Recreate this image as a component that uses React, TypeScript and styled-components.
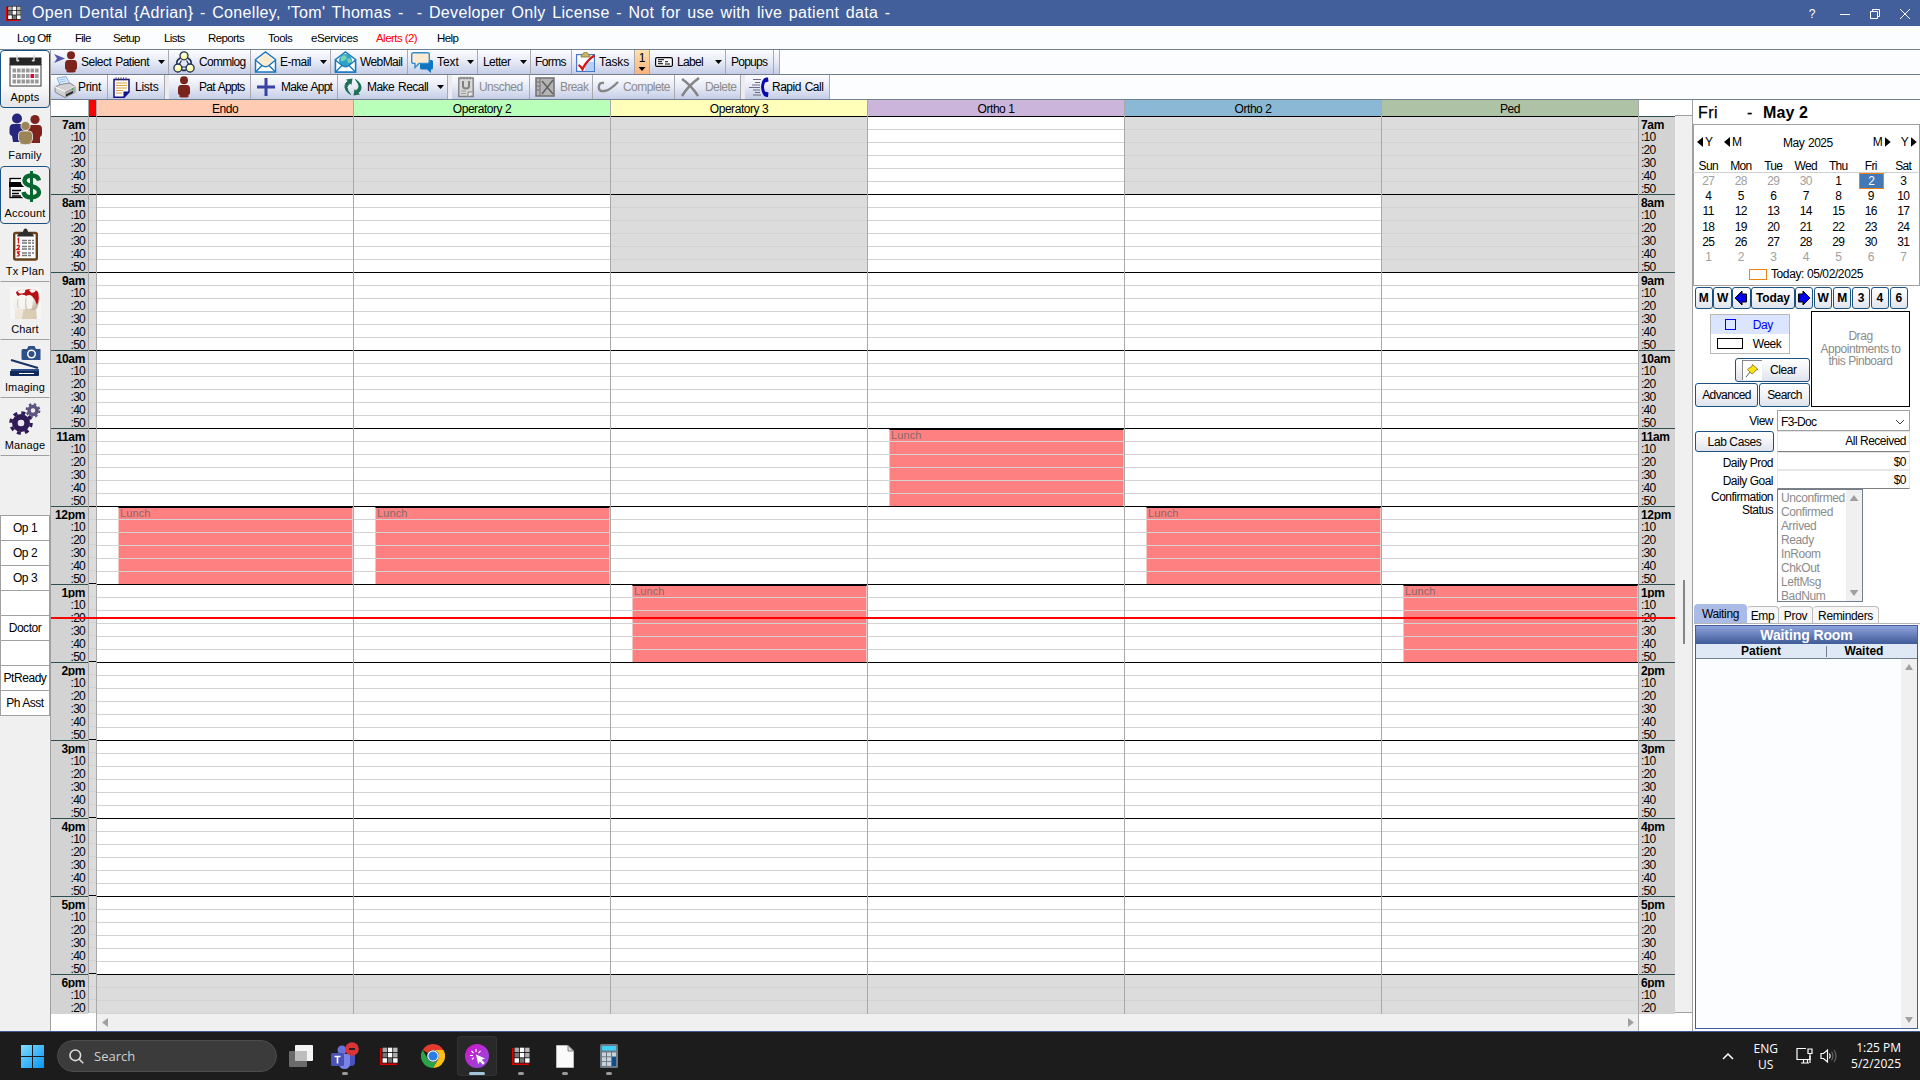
import React from "react";
import styled, { createGlobalStyle, css } from "styled-components";

const GlobalStyle = createGlobalStyle`
  * { box-sizing: border-box; }
  html, body { margin: 0; padding: 0; overflow: hidden; }
  body {
    font-family: "Liberation Sans", Arial, sans-serif;
    font-size: 12px;
    color: #000;
    background: #fff;
  }
  svg { display: block; flex: none; }
`;

const Screen = styled.div`
  width: 1920px;
  height: 1080px;
  display: flex;
  flex-direction: column;
  overflow: hidden;
  background: #fff;
  white-space: pre;
`;

const Txt = styled.span<{ $ls?: number }>`
  letter-spacing: ${(p) => p.$ls ?? -0.5}px;
  word-spacing: 1px;
`;

/* ---------- title bar and menu ---------- */

const TitleBar = styled.header`
  height: 26px;
  flex: none;
  display: flex;
  align-items: center;
  background: #425e9b;
  color: #fff;
  padding-left: 6px;
`;
const TitleText = styled.div`
  margin-left: 11px;
  flex: 1;
  font-size: 16px;
  line-height: 26px;
  letter-spacing: 0.33px;
  word-spacing: 1.8px;
`;
const WindowButtons = styled.div`
  display: flex;
  align-items: center;
  svg { margin-top: 2px; }
`;
const HelpMark = styled.span`
  width: 30px;
  text-align: center;
  font-size: 12px;
  padding-top: 2px;
`;
const MenuBar = styled.nav`
  height: 24px;
  flex: none;
  display: flex;
  align-items: center;
  padding-left: 17px;
  background: #fcfdfe;
  border-bottom: 1px solid #708090;
`;
const MenuItem = styled.div<{ $w: number; $alert?: boolean; $ls: number }>`
  width: ${(p) => p.$w}px;
  font-size: 11.5px;
  letter-spacing: ${(p) => p.$ls}px;
  color: ${(p) => (p.$alert ? "#f00" : "#000")};
`;

const MENU: [string, number, number][] = [
  ["Log Off", 58, -0.55],
  ["File", 38, -0.75],
  ["Setup", 51, -0.65],
  ["Lists", 44, -0.6],
  ["Reports", 60, -0.6],
  ["Tools", 43, -0.5],
  ["eServices", 65, -0.42],
  ["Alerts (2)", 61, -0.55],
  ["Help", 60, -0.6],
];

/* ---------- main frame ---------- */

const Body = styled.div`
  flex: 1;
  min-height: 0;
  display: flex;
`;
const SideBar = styled.aside`
  width: 51px;
  flex: none;
  display: flex;
  flex-direction: column;
  background: #f0f0f0;
  border-right: 1px solid #a0a0a0;
`;
const Module = styled.div<{ $boxed?: boolean; $line?: boolean; $shade?: boolean }>`
  height: 58px;
  flex: none;
  display: flex;
  flex-direction: column;
  align-items: center;
  padding-top: 2px;
  border: 1px solid transparent;
  font-size: 11px;
  letter-spacing: 0.15px;
  ${(p) => p.$line && css`border-bottom-color: #a0a0a0;`}
  ${(p) =>
    p.$boxed &&
    css`
      border-color: #1c5180;
      border-radius: 4px;
    `}
  ${(p) => p.$shade && css`background: linear-gradient(#fff 55%, #e3e3e8);`}
`;
const ModuleIcon = styled.div`
  height: 35px;
  display: flex;
  align-items: center;
`;
const ModuleName = styled.div`
  line-height: 14px;
  margin-top: 2px;
`;
const OpList = styled.div`
  margin-top: 59px;
  border: 1px solid #a0a0a0;
  border-bottom: 0;
  background: #fff;
`;
const OpItem = styled.div`
  height: 25px;
  line-height: 24px;
  text-align: center;
  letter-spacing: -0.45px;
  border-bottom: 1px solid #a0a0a0;
`;
const Main = styled.div`
  flex: 1;
  min-width: 0;
  display: flex;
  flex-direction: column;
`;

/* ---------- tool bars ---------- */

const ToolBar = styled.div`
  height: 25px;
  flex: none;
  display: flex;
  border-bottom: 1px solid #708090;
  background: #fcfdfe;
`;
const ToolButton = styled.div<{ $w: number; $at: number; $off?: boolean }>`
  width: ${(p) => p.$w}px;
  display: grid;
  grid-template-columns: ${(p) => p.$at}px 1fr auto;
  align-items: center;
  background: linear-gradient(#fdfdff, #e6eaf5 50%, #c5cde7);
  border-right: 1px solid #a9a9ad;
  color: ${(p) => (p.$off ? "#8b8b8b" : "#000")};
  line-height: 24px;
`;
const IconCell = styled.div`
  display: flex;
  justify-content: center;
`;
const Drop = styled.i<{ $right?: number }>`
  width: 7px;
  height: 4px;
  margin-right: ${(p) => p.$right ?? 3}px;
  background: #000;
  clip-path: polygon(0 0, 100% 0, 50% 100%);
`;
const ToolGap = styled.div`
  width: 4px;
  background: #ececf0;
`;
const TaskCount = styled.div`
  width: 15px;
  display: flex;
  flex-direction: column;
  align-items: center;
  background: linear-gradient(#fde3ae, #fbb27c);
  border-right: 1px solid #a9a9ad;
  line-height: 17px;
`;

/* ---------- schedule ---------- */

const Work = styled.div`
  flex: 1;
  min-height: 0;
  display: flex;
`;
const Schedule = styled.section`
  width: 1642px;
  flex: none;
  position: relative;
  display: grid;
  grid-template-columns: 37px 9px 1542px 36px 17px;
  grid-template-rows: 913px 1fr;
  border-right: 1px solid #a0a0a0;
`;
const TimeColumn = styled.div<{ $right?: boolean }>`
  display: flex;
  flex-direction: column;
  text-align: ${(p) => (p.$right ? "left" : "right")};
  padding-top: 16px;
  div { padding: ${(p) => (p.$right ? "0 0 0 2px" : "0 3px 0 0")}; }
`;
const TimeSlot = styled.div<{ $hour?: boolean; $end?: boolean }>`
  height: 13px;
  line-height: ${(p) => (p.$hour ? 16 : 14)}px;
  background: #d3d3d3;
  font-weight: ${(p) => (p.$hour ? "bold" : "normal")};
  letter-spacing: ${(p) => (p.$hour ? -0.35 : -0.75)}px;
  border-bottom: ${(p) => (p.$end ? "1px solid #2f4f4f" : "0")};
`;
const TimeTop = styled.div`
  height: 1px;
  flex: none;
  background: #2f4f4f;
`;
const ProvBar = styled.div`
  display: flex;
  flex-direction: column;
  border-left: 1px solid #a9a9a9;
  border-right: 1px solid #a9a9a9;
`;
const ProvColor = styled.div`
  height: 17px;
  flex: none;
  background: #f00;
  border-bottom: 1px solid #000;
`;
const ProvSlot = styled.div<{ $end?: boolean }>`
  height: 13px;
  background: #dcdcdc;
  border-bottom: 1px solid ${(p) => (p.$end ? "#000" : "#d0d0d0")};
`;
const Operatories = styled.div`
  display: grid;
  grid-template-columns: repeat(6, 257px);
`;
const OpColumn = styled.div`
  border-right: 1px solid #a9a9a9;
  position: relative;
`;
const OpHeader = styled.div<{ $color: string }>`
  height: 17px;
  line-height: 18px;
  text-align: center;
  letter-spacing: -0.45px;
  background: ${(p) => p.$color};
  border-bottom: 1px solid #000;
`;
const Slot = styled.div<{ $closed?: boolean; $end?: boolean }>`
  height: 13px;
  background: ${(p) => (p.$closed ? "#dcdcdc" : "transparent")};
  position: relative;
  border-bottom: 1px solid ${(p) => (p.$end ? "#000" : "#d3d3d3")};
`;
/* lies under the slot lines, so the grid shows through the block */
const Block = styled.div<{ $hour: number }>`
  position: absolute;
  left: 21px;
  right: 0;
  top: ${(p) => 17 + (p.$hour - 7) * 78}px;
  height: 77px;
  background: #ff8080;
  border: solid #f3c4c4;
  border-width: 0 1px;
  border-top: 1px solid #000;
  color: #86696b;
  font-size: 11px;
  letter-spacing: 0.1px;
  line-height: 10px;
  padding-left: 1px;
`;
const NowLine = styled.div`
  position: absolute;
  left: 0;
  top: 517px;
  width: 1624px;
  height: 2px;
  background: #f00;
`;
const VScroll = styled.div`
  margin-top: 15px;
  border-top: 1px solid #a0a0a0;
  border-bottom: 1px solid #a0a0a0;
  background: #f0f0f0;
  display: flex;
  justify-content: center;
  padding-top: 464px;
`;
const VThumb = styled.div`
  width: 2px;
  height: 64px;
  margin-left: 1px;
  background: #858585;
`;
const HScroll = styled.div`
  grid-column: 3;
  grid-row: 2;
  margin-top: 1px;
  background: #f0f0f0;
  border-right: 1px solid #a9a9a9;
  display: flex;
  align-items: center;
  justify-content: space-between;
  padding: 0 4px 0 5px;
`;
const Corner = styled.div`
  grid-column: 1 / 3;
  grid-row: 2;
  border-right: 1px solid #a9a9a9;
`;
const Tri = styled.i<{ $dir: "l" | "r" | "u" | "d"; $w: number; $h: number; $c?: string }>`
  flex: none;
  width: ${(p) => p.$w}px;
  height: ${(p) => p.$h}px;
  background: ${(p) => p.$c ?? "#a0a0a0"};
  clip-path: polygon(
    ${(p) =>
      ({
        l: "0 50%, 100% 0, 100% 100%",
        r: "0 0, 100% 50%, 0 100%",
        u: "50% 0, 100% 100%, 0 100%",
        d: "0 0, 100% 0, 50% 100%",
      })[p.$dir]}
  );
`;

/* ---------- right panel ---------- */

const Panel = styled.aside`
  flex: 1;
  min-width: 0;
  display: flex;
  flex-direction: column;
  padding-left: 1px;
`;
const DayTitle = styled.div`
  height: 24px;
  padding-left: 4px;
  font-size: 16px;
  line-height: 26px;
  display: grid;
  grid-template-columns: 49px 16px 1fr;
  letter-spacing: 0.4px;
  -webkit-text-stroke: 0.25px #000;
  b { letter-spacing: 0.1px; -webkit-text-stroke: 0; }
`;
const Calendar = styled.div`
  height: 162px;
  border: 1px solid #a0a0a0;
  margin-left: -1px;
  display: flex;
  flex-direction: column;
`;
const CalNav = styled.div`
  height: 34px;
  display: flex;
  align-items: center;
  padding: 0 2px 0 3px;
`;
const NavPart = styled.div<{ $ml: number; $low?: boolean }>`
  display: flex;
  align-items: center;
  gap: 2px;
  margin-left: ${(p) => p.$ml}px;
  padding-top: ${(p) => (p.$low ? 2 : 0)}px;
`;
const CalWeek = styled.div<{ $head?: boolean }>`
  display: grid;
  grid-template-columns: repeat(7, 32.5px);
  width: 226px;
  height: ${(p) => (p.$head ? 14 : 15.2)}px;
  line-height: ${(p) => (p.$head ? 14 : 16)}px;
  text-align: center;
  letter-spacing: -0.6px;
  margin-left: -2px;
  ${(p) => p.$head && css`border-bottom: 1px solid #d0d0d0;  letter-spacing: -0.7px;`}
`;
const CalDay = styled.div<{ $dim?: boolean; $sel?: boolean }>`
  color: ${(p) => (p.$sel ? "#fff" : p.$dim ? "#a0a0a0" : "#000")};
  ${(p) =>
    p.$sel &&
    css`
      margin: 0 3px 0 4px;
      height: 16px;
      line-height: 15px;
      background: #4378b6;
      border: 1px solid #f08010;
    `}
`;
const TodayRow = styled.div`
  display: flex;
  align-items: center;
  gap: 4px;
  height: 20px;
  padding-left: 55px;
  letter-spacing: -0.4px;
`;
const TodaySwatch = styled.div`
  width: 18px;
  height: 11px;
  border: 1px solid #f08010;
`;
const raised = css`
  border: 1px solid #1c5180;
  border-radius: 3px;
  background: linear-gradient(#fff, #eef0f5 60%, #dfe3ec);
  display: flex;
  align-items: center;
  justify-content: center;
`;
const JumpRow = styled.div`
  display: flex;
  gap: 0.6px;
  margin: 1px 0 0 0.5px;
`;
const Jump = styled.div<{ $w?: number }>`
  ${raised}
  width: ${(p) => p.$w ?? 18.3}px;
  height: 22px;
  font-weight: bold;
  letter-spacing: -0.1px;
`;
const ControlGrid = styled.div`
  display: flex;
  gap: 1px;
  margin: 2px 0 0 1px;
  height: 97px;
`;
const ControlLeft = styled.div`
  width: 115px;
  flex: none;
  display: flex;
  flex-direction: column;
`;
const ViewToggle = styled.div`
  width: 80px;
  height: 40px;
  margin: 3px 0 4px 15px;
  border: 1px solid #b8b8b8;
`;
const ToggleRow = styled.div<{ $on?: boolean }>`
  height: 19px;
  display: grid;
  grid-template-columns: 38px 1fr;
  align-items: center;
  background: ${(p) => (p.$on ? "#dbe5ff" : "#fff")};
  color: ${(p) => (p.$on ? "#00f" : "#000")};
  > i { justify-self: center; border: 1px solid currentColor; }
`;
const DayBox = styled.i`
  width: 11px;
  height: 11px;
`;
const WeekBox = styled.i`
  width: 26px;
  height: 11px;
`;
const PushButton = styled.div<{ $w: number; $h: number; $ls?: number }>`
  ${raised}
  width: ${(p) => p.$w}px;
  height: ${(p) => p.$h}px;
  letter-spacing: ${(p) => p.$ls ?? -0.4}px;
`;
const ClearButton = styled(PushButton)`
  align-self: flex-end;
  justify-content: flex-start;
  padding-left: 6px;
  gap: 8px;
`;
const PinBox = styled.div`
  width: 20px;
  height: 20px;
  border: solid #888;
  border-width: 1px 0 0 1px;
  background: #fff;
`;
const ButtonPair = styled.div`
  display: flex;
  gap: 1px;
  margin-top: 1px;
`;
const Pinboard = styled.div`
  width: 99px;
  height: 96px;
  border: 1px solid #000;
  padding-top: 18px;
  text-align: center;
  line-height: 12.7px;
  color: #8b8b8b;
  letter-spacing: -0.45px;
`;
const Form = styled.div`
  display: grid;
  grid-template-columns: 80px 133px;
  grid-template-rows: 21px 21px 18px 19px 115px;
  column-gap: 2px;
  margin: 2px 0 0 1px;
`;
const FieldLabel = styled.div<{ $stack?: boolean }>`
  text-align: right;
  padding: ${(p) => (p.$stack ? "2px 2px 0 0" : "0 2px 0 0")};
  line-height: ${(p) => (p.$stack ? 13 : 22)}px;
  letter-spacing: -0.5px;
`;
const Combo = styled.div`
  border: 1px solid #a0a0a0;
  display: flex;
  justify-content: space-between;
  align-items: center;
  padding: 2px 4px 0 3px;
  letter-spacing: -0.65px;
`;
const Field = styled.div<{ $dark?: boolean }>`
  border: 1px solid #e6e6e6;
  border-bottom-color: ${(p) => (p.$dark ? "#808080" : "#e6e6e6")};
  text-align: right;
  padding-right: 3px;
  line-height: 18px;
  letter-spacing: -0.5px;
`;
const StatusBox = styled.div`
  width: 86px;
  height: 113px;
  border: 1px solid #708090;
  display: flex;
`;
const StatusList = styled.div`
  width: 68px;
  padding: 1px 0 0 3px;
  color: #8b8b8b;
  line-height: 14px;
  letter-spacing: -0.38px;
`;
const ListScroll = styled.div`
  width: 16px;
  flex: none;
  display: flex;
  flex-direction: column;
  justify-content: space-between;
  align-items: center;
  padding: 5px 0;
  background: #f0f0f0;
`;
const Tabs = styled.div`
  height: 20px;
  display: flex;
  align-items: flex-end;
  border-bottom: 1px solid #b4b4b4;
`;
const Tab = styled.div<{ $w: number; $on?: boolean }>`
  width: ${(p) => p.$w}px;
  height: ${(p) => (p.$on ? 19 : 17)}px;
  line-height: 18px;
  text-align: center;
  letter-spacing: -0.35px;
  border: 1px solid ${(p) => (p.$on ? "#a9bbe6" : "#bdbdbd")};
  border-bottom: 0;
  border-left-width: ${(p) => (p.$on ? 1 : 0)}px;
  border-radius: 4px 4px 0 0;
  background: ${(p) => (p.$on ? "#a9bbe6" : "#f7f7f7")};
`;
const Room = styled.div`
  flex: 1;
  margin: 1px 2px 2px 1px;
  border: 1px solid #425e9b;
  display: flex;
  flex-direction: column;
  background: #fcfdfe;
`;
const RoomTitle = styled.div`
  height: 18px;
  background: linear-gradient(#8fa4dc, #425e9b);
  border-bottom: 1px solid #425e9b;
  color: #fff;
  text-align: center;
  font-weight: bold;
  font-size: 14px;
  line-height: 19px;
  letter-spacing: -0.1px;
`;
const RoomHead = styled.div`
  height: 15px;
  display: grid;
  grid-template-columns: 130px 1px 1fr;
  align-items: center;
  background: #dfe9f5;
  border-bottom: 1px solid #708090;
  text-align: center;
  font-weight: bold;
  padding-right: 16px;
  i { height: 11px; background: #708090; }
`;
const RoomBody = styled.div`
  flex: 1;
  display: flex;
  justify-content: flex-end;
`;

/* ---------- task bar ---------- */

const TaskBar = styled.footer`
  height: 49px;
  flex: none;
  display: flex;
  align-items: center;
  background: #1c1c1c;
  border-top: 1px solid #3f5a96;
  color: #fff;
  font-family: "Open Sans", "Noto Sans", sans-serif;
  padding-left: 21px;
`;
const SearchPill = styled.div`
  width: 220px;
  height: 32px;
  margin: 0 2px 0 13px;
  border-radius: 16px;
  border: 1px solid #4c4c4c;
  background: #3b3b3b;
  display: flex;
  align-items: center;
  gap: 10px;
  padding-left: 11px;
  color: #d0d0d0;
  font-size: 13px;
`;
const TaskCell = styled.div<{ $on?: boolean }>`
  width: 40px;
  height: 40px;
  margin: 0 2px;
  border-radius: 4px;
  padding-top: 7px;
  display: flex;
  flex-direction: column;
  align-items: center;
  ${(p) => p.$on && css`background: #292929; box-shadow: inset 0 0 0 1px #333;`}
`;
const TaskIcon = styled.div`
  height: 26px;
  display: flex;
  align-items: center;
`;
const RunMark = styled.div<{ $on?: boolean }>`
  width: ${(p) => (p.$on ? 16 : 6)}px;
  height: 3px;
  margin-top: 3px;
  border-radius: 2px;
  background: ${(p) => (p.$on ? "#a4c4dc" : "#9a9a9a")};
`;
const Tray = styled.div`
  margin-left: auto;
  display: flex;
  align-items: center;
  padding-right: 19px;
  font-size: 12px;
  line-height: 16px;
`;
const Lang = styled.div`
  margin: 1px 18px 0 20px;
  text-align: center;
`;
const Clock = styled.div`
  width: 64px;
  text-align: right;
`;

/* ---------- drawings ---------- */

const AppGrid = ({ s = 15 }: { s?: number }) => {
  const cells = ["#aaa", "#fff", "#bbb", "#777", "#fff", "#aaa", "#fff", "#777", "#fff"];
  return (
    <svg width={s} height={s} viewBox="0 0 17 17">
      <path d="M0 1v16h16v-2H2V1z" fill="#e00000" />
      <rect x="1.5" y="0" width="15.5" height="15.5" fill="#111" />
      {cells.map((c, i) => (
        <rect key={i} x={2.4 + (i % 3) * 5} y={0.6 + Math.floor(i / 3) * 5} width="4.2" height="4.2" fill={c} />
      ))}
    </svg>
  );
};

const Person = ({ c = "#7b241c" }: { c?: string }) => (
  <svg width="14" height="22" viewBox="0 0 14 22">
    <circle cx="7" cy="4.2" r="4" fill={c} />
    <path d="M1 13q0-4 3-4h6q3 0 3 4v4q0 1.5-1.5 2v2q-4.500 1-9 0v-2Q1 18.500 1 17z" fill={c} />
  </svg>
);

const icons: Record<string, React.ReactNode> = {
  select: (
    <svg width="24" height="22" viewBox="0 0 24 22">
      <path d="M0 3l11 4.500L0 12l3-4.500z" fill="#5457a6" />
      <circle cx="17" cy="4.300" r="4" fill="#7b241c" />
      <path d="M11 13q0-4 3-4h6q3 0 3 4v4q0 1.500-1.500 2v2q-4.500 1-9 0v-2Q11 18.500 11 17z" fill="#7b241c" />
    </svg>
  ),
  commlog: (
    <svg width="22" height="22" viewBox="0 0 22 22">
      <path d="M7.500 7Q3 9 4 13M14.500 7Q19 9 18 13M9 19q2 1 4 0" stroke="#1d2f55" strokeWidth="1.600" fill="none" />
      <path d="M8.500 9.500L6.500 13M13.500 9.500l2 3.500M9 16h4" stroke="#1d2f55" strokeWidth="1.200" fill="none" />
      {[[11, 4.8], [4.900, 17], [17.100, 17]].map(([x, y]) => (
        <g key={x} stroke="#1d2f55" strokeWidth="1.300">
          <circle cx={x} cy={y} r="4" fill="#fbf7a0" />
          <circle cx={x} cy={y - 1} r="2" fill="#fffde0" stroke="none" />
        </g>
      ))}
    </svg>
  ),
  email: (
    <svg width="23" height="22" viewBox="0 0 23 22">
      <path d="M1.500 8.500L11.500 1l10 7.500v12.500h-20z" fill="#fff" stroke="#1977bd" strokeWidth="1.500" />
      <path d="M4.500 7.500L11.500 2.500l7 5v4.500l-7 4-7-4z" fill="#fdebd0" />
      <path d="M1.500 9l6.500 5.500L1.500 21M21.500 9L15 14.500l6.500 6.500M8 14.500q3.500 2.500 7 0" fill="none" stroke="#1977bd" strokeWidth="1.400" />
    </svg>
  ),
  webmail: (
    <svg width="23" height="22" viewBox="0 0 23 22">
      <path d="M1.500 8.500L11.500 1l10 7.500v12.500h-20z" fill="#fff" stroke="#1977bd" strokeWidth="1.500" />
      <circle cx="11.500" cy="9.500" r="6.500" fill="#2aa5c8" />
      <path d="M7 6q3-3 5-1t-1 4-4 1zM13 8q3-2 4 1t-3 3z" fill="#7fd0b0" />
      <path d="M1.500 9l6.500 5.500q3.500 2.500 7 0L21.500 9v12h-20z" fill="#fff" stroke="#1977bd" strokeWidth="1.400" />
      <path d="M1.500 21L8 14.500M21.500 21L15 14.500" stroke="#1977bd" strokeWidth="1.300" />
    </svg>
  ),
  text: (
    <svg width="23" height="21" viewBox="0 0 23 21">
      <path d="M9 8h11.500q1.500 0 1.500 1.500V16q0 1.500-1.500 1.500H20V21l-4-3.500h-5Q9 17.500 9 16z" fill="#0f75c0" />
      <path d="M2.500.8h14q1.800 0 1.800 1.800v7q0 1.800-1.800 1.800H8l-4 4.100v-4.100H2.500Q.7 11.400.7 9.600v-7Q.7.8 2.500.8z" fill="#fdebd0" stroke="#2f8fd0" strokeWidth="1.400" />
    </svg>
  ),
  tasks: (
    <svg width="19" height="20" viewBox="0 0 19 20">
      <rect x=".6" y="2.600" width="17.800" height="16.800" fill="#fff" stroke="#4a78c8" strokeWidth="1.200" />
      <rect x="9" y="10" width="9" height="9" fill="#b9d0f5" />
      <path d="M5 5q0-3 2-3 .5-2 2.500-2T12 2q2 0 2 3z" fill="#c8b560" stroke="#82753a" strokeWidth=".8" />
      <path d="M2.500 13q2 1 4 4Q11 8 18.500 3.500" fill="none" stroke="#d01818" strokeWidth="2.400" />
    </svg>
  ),
  label: (
    <svg width="18" height="10" viewBox="0 0 18 10">
      <rect x=".6" y=".6" width="16.800" height="8.800" rx="1.500" fill="#fff" stroke="#000" strokeWidth="1.200" />
      <path d="M3 2.700h6M3 4.700h4M3 6.700h5M10 4.700h3M10 7h5" stroke="#000" strokeWidth="1" />
    </svg>
  ),
  print: (
    <svg width="22" height="22" viewBox="0 0 22 22">
      <path d="M3 2l9-1.500 4 7.500-9 3z" fill="#d6ebff" stroke="#6fa0d0" strokeWidth=".8" />
      <path d="M5 4l6-1M6 6l6-1" stroke="#9cc4ee" />
      <path d="M1 11l5-2.500L16 7l5 3.500v6L11 21.500 1 16z" fill="#d2d2d2" stroke="#808080" strokeWidth=".9" />
      <path d="M1 11l10 4.500L21 10.500" fill="none" stroke="#fff" />
      <path d="M11 15.500v6l10-5v-6z" fill="#ababab" />
      <path d="M12 18.500l7-3.500v2l-7 3.500z" fill="#222" />
      <circle cx="18.500" cy="13" r=".8" fill="#2a2" />
    </svg>
  ),
  lists: (
    <svg width="17" height="21" viewBox="0 0 17 21">
      <path d="M1 2.500h15V15l-5 5.300H1z" fill="#fffdf3" stroke="#10108c" strokeWidth="1.500" />
      <path d="M16 14.500h-5.500V20.500z" fill="#10108c" />
      <path d="M3 .3v3M5.500.3v3M8 .3v3M10.500.3v3M13 .3v3" stroke="#444" strokeWidth=".9" />
      <path d="M3 6h11M3 8.500h11M3 11h11M3 13.500h7M3 16h6" stroke="#d3a044" strokeWidth="1.100" />
    </svg>
  ),
  person: <Person />,
  plus: (
    <svg width="18" height="18" viewBox="0 0 18 18">
      <path d="M7.500 0h3v7.500H18v3h-7.500V18h-3v-7.500H0v-3h7.500z" fill="#3a41a0" />
    </svg>
  ),
  recall: (
    <svg width="20" height="18" viewBox="0 0 20 18">
      <path d="M7 2.500Q1.500 4 2 9.500q.5 4 5.500 7Q4 12 4 9.500T7.500 5z" fill="#1d7058" stroke="#1d7058" />
      <path d="M3 1.500l6.500-1L8.500 7z" fill="#1d7058" />
      <path d="M13 15.500q5.500-1.500 5-7-.5-4-5.500-7Q16 6 16 8.500t-3.500 4.500z" fill="#1d7058" stroke="#1d7058" />
      <path d="M17 16.500l-6.500 1 1-6.500z" fill="#1d7058" />
    </svg>
  ),
  unsched: (
    <svg width="16" height="22" viewBox="0 0 16 22">
      <path d="M.8 2h14.400v18.500H.8z" fill="#d8d8d8" stroke="#808080" strokeWidth="1.400" />
      <path d="M5 5v5q0 2.500 3 2.500t3-2.500V5" fill="none" stroke="#808080" strokeWidth="2" />
      <path d="M3 .5v3M6 .5v3M9 .5v3M12 .5v3" stroke="#888" />
      <path d="M3 15h5M3 17.500h5" stroke="#999" />
      <path d="M10 21v-5h5.200" fill="#eee" stroke="#808080" />
    </svg>
  ),
  broken: (
    <svg width="20" height="20" viewBox="0 0 20 20">
      <path d="M1 1h18v18H1z" fill="#b4b4b4" stroke="#707070" strokeWidth="1.500" />
      <path d="M5 1v18M1 5h4M1 9h4M1 13h4" stroke="#707070" />
      <path d="M7 4l11 13M18 3L7 17" stroke="#606060" strokeWidth="1.500" />
    </svg>
  ),
  complete: (
    <svg width="22" height="12" viewBox="0 0 22 12">
      <path d="M7 2Q2 1 1.800 6T7.500 10Q12 10 21 1" fill="none" stroke="#858585" strokeWidth="2.400" />
    </svg>
  ),
  del: (
    <svg width="20" height="20" viewBox="0 0 20 20">
      <path d="M2 2q9 6 16 17M19 1Q8 9 2 19" fill="none" stroke="#858585" strokeWidth="2.600" />
    </svg>
  ),
  rapid: (
    <svg width="20" height="22" viewBox="0 0 20 22">
      <path d="M4 3.500h8M6 6.500h5M3 9h8M0 11.500h11M4 14h7M6 16.500h5M4 19h8" stroke="#6a6a80" strokeWidth="1" />
      <path d="M19 1.500q-6-1-7 9.500 1 10.500 7 10l.5-4.500-3.500-1q-2-4.500 0-9l3.500-1z" fill="#0a0ab0" />
    </svg>
  ),
};

const moduleIcons: Record<string, React.ReactNode> = {
  Appts: (
    <svg width="33" height="32" viewBox="0 0 33 32">
      <rect x="1" y="10" width="31" height="21" fill="#fff" stroke="#555" strokeWidth="1.200" />
      <path d="M.5 2.500h32V10H.5z" fill="#262626" />
      <path d="M8 0v5q0 2 2 0M25 0v5q0 2-2 0" stroke="#ddd" strokeWidth="1.500" fill="none" />
      {[0, 1, 2].map((r) =>
        [0, 1, 2, 3, 4, 5].map((c) => (
          <rect key={r + "-" + c} x={3.5 + c * 4.5} y={13.500 + r * 5.500} width="3.600" height="4" fill={r === 1 && c === 4 ? "#d8063a" : "#9a9a9a"} />
        )),
      )}
    </svg>
  ),
  Family: (
    <svg width="33" height="32" viewBox="0 0 33 32">
      <circle cx="8" cy="5.500" r="5" fill="#26267c" />
      <path d="M.5 16q0-5 4-5h7q4 0 4 5v13H4l-1-6q-2.500-1-2.500-3z" fill="#26267c" />
      <circle cx="26" cy="6.500" r="4.600" fill="#7d221c" />
      <path d="M19 16q0-4 3.500-4h7q3.500 0 3.500 4v5q0 2-2 3v6H19z" fill="#7d221c" />
      <circle cx="16.500" cy="13" r="4.600" fill="#9c8456" stroke="#f0f0f0" strokeWidth=".8" />
      <path d="M9.500 22q0-4 3.500-4h7q3.500 0 3.500 4v4q0 2-1.500 2.500V31q-5.500 1.500-11 0v-2.500Q9.500 28 9.500 26z" fill="#9c8456" stroke="#f0f0f0" strokeWidth=".8" />
    </svg>
  ),
  Account: (
    <svg width="33" height="31" viewBox="0 0 33 31">
      <rect x="1" y="7.500" width="21" height="19" fill="#fff" stroke="#000" strokeWidth="1.300" />
      <path d="M0 11h22v5H0z" fill="#000" />
      <path d="M3 19.500h9M3 22.500h7M3 25h9" stroke="#000" strokeWidth="1.300" />
      <path d="M30 9q-1-5-7.500-5T15 9.500q0 4 7.500 6 7.500 1.500 7.500 6t-7.500 5Q15.500 26.500 14.500 21" fill="none" stroke="#f4f4f4" strokeWidth="7" />
      <path d="M22.500 0v31" stroke="#08672f" strokeWidth="3" />
      <path d="M30 9.500q-1-5-7.500-5T15.500 9.500q0 4 7 5.700 7.500 1.800 7.500 6t-7.500 5.300Q15.500 26.500 14.500 21" fill="none" stroke="#08672f" strokeWidth="4.400" />
    </svg>
  ),
  "Tx Plan": (
    <svg width="25" height="33" viewBox="0 0 25 33">
      <rect x="1.200" y="5" width="22.600" height="26.500" rx="1.500" fill="#fff" stroke="#67411c" strokeWidth="2.400" />
      <path d="M4 8.500q1-4 6-4.500Q10.500.5 12.500.5T15 4q5 .5 6 4.500z" fill="#2e2e2e" />
      <path d="M9 12.500h12M9 15h12M9 18.500h12M9 21h12M9 25h12M9 27.500h9" stroke="#777" strokeWidth="1.300" strokeDasharray="5 1 3 1" />
      <path d="M4.500 11.500l1-1v5M3.800 18q2-1.500 2.500 0t-2.500 3.500h3M3.800 24h2.500l-1.300 1.500q2 .5 1 2-1 1-2.300.3" fill="none" stroke="#e01010" strokeWidth="1.300" />
    </svg>
  ),
  Chart: (
    <svg width="31" height="32" viewBox="0 0 31 32">
      <defs>
        <linearGradient id="tooth" x1="0" y1="0" x2="1" y2="1">
          <stop offset="0" stopColor="#fff" />
          <stop offset=".6" stopColor="#efece6" />
          <stop offset="1" stopColor="#a8977a" />
        </linearGradient>
      </defs>
      <rect width="31" height="32" fill="#f6f6f6" />
      <path d="M6 20h20l1 12H5z" fill="#d9cdb4" />
      <path d="M6 20h8l-2 12H5z" fill="#efe8da" />
      <path d="M1 11Q3 4 8 3.500q4-3 9-1.500 10-2 12.500 4 1 8-2.500 15-4 4-8 1-4 4-8 0-5 2-7-2Q.5 16 1 11z" fill="url(#tooth)" />
      <path d="M6 5q4-3 9-2 9-2.500 13 2 2 7-1 13-2-6-5-9-3-2-6 0-4-3-8 0-2-2-2-4z" fill="#b80f12" />
      <path d="M8 4q4-2.500 7-1 1 3-3 3.500T8 4zM19 3q4-2 7 .5-2 3-5 2zM10 9q3-2 6 0l-1 13q-3 1-5-1-2-6 0-12zM17 9q4-1 6 4l-1 8q-3 2-5 0z" fill="#f7f5f1" />
      <path d="M8 12q-1 5 0 9M16 11q-1 6 0 11" stroke="#d0ccc2" fill="none" />
    </svg>
  ),
  Imaging: (
    <svg width="32" height="32" viewBox="0 0 32 32">
      <path d="M14 4h4l1.500-3h6L27 4h4.500v11H14q-1.500 0-1.500-1.500v-8Q12.500 4 14 4z" fill="#2d4f8a" />
      <circle cx="22.500" cy="9" r="4.500" fill="#fff" />
      <circle cx="22.500" cy="9" r="3" fill="#2d4f8a" />
      <path d="M2 15l27 8" stroke="#1b3468" strokeWidth="2.200" />
      <path d="M1 26h29v4q0 1-1 1H2q-1 0-1-1z" fill="#12295c" />
      <path d="M2 24h28v2H2z" fill="#2d4f8a" />
      <path d="M10 28.500h15" stroke="#fff" />
    </svg>
  ),
  Manage: (
    <svg width="32" height="32" viewBox="0 0 32 32">
      <g fill="none" stroke="#5e5380">
        <circle cx="24" cy="7.500" r="4" strokeWidth="3.500" />
        <circle cx="24" cy="7.500" r="6.300" strokeWidth="2.200" strokeDasharray="2.500 2.450" />
      </g>
      <g fill="none" stroke="#2f1a55">
        <circle cx="12" cy="20" r="6" strokeWidth="6" />
        <circle cx="12" cy="20" r="10.200" strokeWidth="3.200" strokeDasharray="4 4.010" />
      </g>
      <circle cx="12" cy="20" r="3.300" fill="#e8e4f0" />
    </svg>
  ),
};

const Arrow = ({ flip }: { flip?: boolean }) => (
  <svg width="14" height="16" viewBox="0 0 14 16">
    <path
      d={flip ? "M13 8L6 1v3H1.500v8H6v3z" : "M1 8l7-7v3h4.500v8H8v3z"}
      fill="#0000f0"
      stroke="#000"
      strokeWidth="1"
    />
  </svg>
);

/* ---------- data ---------- */

type Tool = { k: string; icon?: string; w: number; at: number; ls: number; drop?: boolean; off?: boolean; gap?: boolean };

const TOOLS_1: Tool[] = [
  { k: "Select Patient", icon: "select", w: 118, at: 30, ls: -0.5, drop: true },
  { k: "Commlog", icon: "commlog", w: 82, at: 30, ls: -0.7 },
  { k: "E-mail", icon: "email", w: 80, at: 29, ls: -0.5, drop: true },
  { k: "WebMail", icon: "webmail", w: 77, at: 29, ls: -0.6 },
  { k: "Text", icon: "text", w: 70, at: 29, ls: -0.05, drop: true },
  { k: "Letter", w: 53, at: 5, ls: -0.55, drop: true },
  { k: "Forms", w: 41, at: 4, ls: -0.6 },
  { k: "Tasks", icon: "tasks", w: 63, at: 27, ls: -0.1 },
];
const TOOLS_1B: Tool[] = [
  { k: "Label", icon: "label", w: 76, at: 27, ls: -0.65, drop: true },
  { k: "Popups", w: 48, at: 5, ls: -0.75 },
];
const TOOLS_2: Tool[] = [
  { k: "Print", icon: "print", w: 57, at: 27, ls: -0.35 },
  { k: "Lists", icon: "lists", w: 57, at: 27, ls: -0.25, gap: true },
  { k: "Pat Appts", icon: "person", w: 82, at: 30, ls: -0.75 },
  { k: "Make Appt", icon: "plus", w: 87, at: 30, ls: -0.72 },
  { k: "Make Recall", icon: "recall", w: 110, at: 29, ls: -0.53, drop: true, gap: true },
  { k: "Unsched", icon: "unsched", w: 78, at: 27, ls: -0.55, off: true },
  { k: "Break", icon: "broken", w: 63, at: 30, ls: -0.6, off: true },
  { k: "Complete", icon: "complete", w: 82, at: 30, ls: -0.55, off: true },
  { k: "Delete", icon: "del", w: 66, at: 30, ls: -0.55, off: true, gap: true },
  { k: "Rapid Call", icon: "rapid", w: 85, at: 27, ls: -0.5 },
];

const Tools = ({ items }: { items: Tool[] }) => (
  <>
    {items.map((t) => (
      <React.Fragment key={t.k}>
        <ToolButton $w={t.w} $at={t.at} $off={t.off}>
          <IconCell>{t.icon && icons[t.icon]}</IconCell>
          <Txt $ls={t.ls}>{t.k}</Txt>
          {t.drop && <Drop />}
        </ToolButton>
        {t.gap && <ToolGap />}
      </React.Fragment>
    ))}
  </>
);

const HOURS = ["7am", "8am", "9am", "10am", "11am", "12pm", "1pm", "2pm", "3pm", "4pm", "5pm", "6pm"];
const SLOTS = HOURS.flatMap((h, i) =>
  (i === 11 ? ["", "10", "20"] : ["", "10", "20", "30", "40", "50"]).map((m) => ({
    hour: 7 + i,
    text: m ? ":" + m : h,
    top: !m,
    end: m === "50",
  })),
);

const OPS = [
  { name: "Endo", color: "#ffcbb3", closed: [7, 18], lunch: 12 },
  { name: "Operatory 2", color: "#b9ffb9", closed: [7, 18], lunch: 12 },
  { name: "Operatory 3", color: "#ffffb9", closed: [7, 8, 18], lunch: 13 },
  { name: "Ortho 1", color: "#cbb5db", closed: [18], lunch: 11 },
  { name: "Ortho 2", color: "#8bb8d4", closed: [7, 18], lunch: 12 },
  { name: "Ped", color: "#aec3a5", closed: [7, 8, 18], lunch: 13 },
];

const Times = ({ right }: { right?: boolean }) => (
  <TimeColumn $right={right}>
    <TimeTop />
    {SLOTS.map((s) => (
      <TimeSlot key={s.hour + s.text} $hour={s.top} $end={s.end}>
        {s.text}
      </TimeSlot>
    ))}
  </TimeColumn>
);

const WEEKS = [
  [27, 28, 29, 30, 1, 2, 3],
  [4, 5, 6, 7, 8, 9, 10],
  [11, 12, 13, 14, 15, 16, 17],
  [18, 19, 20, 21, 22, 23, 24],
  [25, 26, 27, 28, 29, 30, 31],
  [1, 2, 3, 4, 5, 6, 7],
];

const STATUSES = ["Unconfirmed", "Confirmed", "Arrived", "Ready", "InRoom", "ChkOut", "LeftMsg", "BadNum"];

const TaskItem = ({ children, run, on }: { children: React.ReactNode; run?: boolean; on?: boolean }) => (
  <TaskCell $on={on}>
    <TaskIcon>{children}</TaskIcon>
    {(run || on) && <RunMark $on={on} />}
  </TaskCell>
);

export default function App() {
  return (
    <Screen>
      <GlobalStyle />
      <TitleBar>
        <AppGrid />
        <TitleText>{"Open Dental {Adrian} - Conelley, 'Tom' Thomas -  - Developer Only License - Not for use with live patient data -"}</TitleText>
        <WindowButtons>
          <HelpMark>?</HelpMark>
          <svg width="93" height="12" viewBox="0 0 93 12" fill="none" stroke="#fff">
            <path d="M13 6.500h10M43.500 3.500h7v7h-7zM45.500 3.500v-2h7v7h-2M73 1l10 10M83 1L73 11" />
          </svg>
        </WindowButtons>
      </TitleBar>
      <MenuBar>
        {MENU.map(([t, w, ls]) => (
          <MenuItem key={t} $w={w} $ls={ls} $alert={t.startsWith("Alerts")}>
            {t}
          </MenuItem>
        ))}
      </MenuBar>
      <Body>
        <SideBar>
          {Object.keys(moduleIcons).map((m, i) => (
            <Module key={m} $boxed={i === 0 || i === 2} $shade={i === 0} $line={i > 2}>
              <ModuleIcon>{moduleIcons[m]}</ModuleIcon>
              <ModuleName>{m}</ModuleName>
            </Module>
          ))}
          <OpList>
            {["Op 1", "Op 2", "Op 3", "", "Doctor", "", "PtReady", "Ph Asst"].map((o, i) => (
              <OpItem key={i}>{o}</OpItem>
            ))}
          </OpList>
        </SideBar>
        <Main>
          <ToolBar>
            <Tools items={TOOLS_1} />
            <TaskCount>
              1
              <Drop $right={0} />
            </TaskCount>
            <Tools items={TOOLS_1B} />
            <ToolButton $w={6} $at={0} />
          </ToolBar>
          <ToolBar>
            <Tools items={TOOLS_2} />
          </ToolBar>
          <Work>
            <Schedule>
              <Times />
              <ProvBar>
                <ProvColor />
                {SLOTS.map((s) => (
                  <ProvSlot key={s.hour + s.text} $end={s.end} />
                ))}
              </ProvBar>
              <Operatories>
                {OPS.map((o) => (
                  <OpColumn key={o.name}>
                    <Block $hour={o.lunch}>Lunch</Block>
                    <OpHeader $color={o.color}>{o.name}</OpHeader>
                    {SLOTS.map((s) => (
                      <Slot key={s.hour + s.text} $closed={o.closed.includes(s.hour)} $end={s.end} />
                    ))}
                  </OpColumn>
                ))}
              </Operatories>
              <Times right />
              <VScroll>
                <VThumb />
              </VScroll>
              <Corner />
              <HScroll>
                <Tri $dir="l" $w={6} $h={9} />
                <Tri $dir="r" $w={6} $h={9} />
              </HScroll>
              <NowLine />
            </Schedule>
            <Panel>
              <DayTitle>
                <span>Fri</span>
                <span>-</span>
                <b>May 2</b>
              </DayTitle>
              <Calendar>
                <CalNav>
                  <NavPart $ml={0}>
                    <Tri $dir="l" $w={6} $h={10} $c="#000" />Y
                  </NavPart>
                  <NavPart $ml={11}>
                    <Tri $dir="l" $w={6} $h={10} $c="#000" />M
                  </NavPart>
                  <NavPart $ml={41} $low>
                    <Txt $ls={-0.5}>May 2025</Txt>
                  </NavPart>
                  <NavPart $ml={40}>
                    M<Tri $dir="r" $w={6} $h={10} $c="#000" />
                  </NavPart>
                  <NavPart $ml={10}>
                    Y<Tri $dir="r" $w={6} $h={10} $c="#000" />
                  </NavPart>
                </CalNav>
                <CalWeek $head>
                  {["Sun", "Mon", "Tue", "Wed", "Thu", "Fri", "Sat"].map((d) => (
                    <div key={d}>{d}</div>
                  ))}
                </CalWeek>
                {WEEKS.map((w, r) => (
                  <CalWeek key={r}>
                    {w.map((d) => (
                      <CalDay key={d} $dim={(r === 0 && d > 7) || r === 5} $sel={r === 0 && d === 2}>
                        {d}
                      </CalDay>
                    ))}
                  </CalWeek>
                ))}
                <TodayRow>
                  <TodaySwatch />
                  Today: 05/02/2025
                </TodayRow>
              </Calendar>
              <JumpRow>
                <Jump>M</Jump>
                <Jump>W</Jump>
                <Jump>
                  <Arrow />
                </Jump>
                <Jump $w={43.400}>Today</Jump>
                <Jump>
                  <Arrow flip />
                </Jump>
                <Jump>W</Jump>
                <Jump>M</Jump>
                <Jump>3</Jump>
                <Jump>4</Jump>
                <Jump>6</Jump>
              </JumpRow>
              <ControlGrid>
                <ControlLeft>
                  <ViewToggle>
                    <ToggleRow $on>
                      <DayBox />
                      <Txt $ls={-0.5}>{" Day"}</Txt>
                    </ToggleRow>
                    <ToggleRow>
                      <WeekBox />
                      <Txt $ls={-0.5}>{" Week"}</Txt>
                    </ToggleRow>
                  </ViewToggle>
                  <ClearButton $w={75} $h={24}>
                    <PinBox>
                      <svg width="19" height="19" viewBox="0 0 19 19">
                        <path d="M3 16l5-6" stroke="#555" />
                        <path d="M9.500 3.500l5.500 5-2 .5-3 3.500-1 .5-4.500-4.500 1-1L9 5.500z" fill="#ffe414" stroke="#8c7a10" strokeWidth=".9" />
                      </svg>
                    </PinBox>
                    Clear
                  </ClearButton>
                  <ButtonPair>
                    <PushButton $w={63} $h={24} $ls={-0.6}>Advanced</PushButton>
                    <PushButton $w={51} $h={24} $ls={-0.55}>Search</PushButton>
                  </ButtonPair>
                </ControlLeft>
                <Pinboard>{"Drag\nAppointments to\nthis Pinboard"}</Pinboard>
              </ControlGrid>
              <Form>
                <FieldLabel>View</FieldLabel>
                <Combo>
                  F3-Doc
                  <svg width="10" height="6" viewBox="0 0 10 6" fill="none" stroke="#444">
                    <path d="M1 1l4 4 4-4" />
                  </svg>
                </Combo>
                <PushButton $w={79} $h={21} $ls={-0.4}>Lab Cases</PushButton>
                <Field $dark>All Received</Field>
                <FieldLabel>Daily Prod</FieldLabel>
                <Field>$0</Field>
                <FieldLabel>Daily Goal</FieldLabel>
                <Field $dark>$0</Field>
                <FieldLabel $stack>{"Confirmation\nStatus"}</FieldLabel>
                <StatusBox>
                  <StatusList>
                    {STATUSES.map((s) => (
                      <div key={s}>{s}</div>
                    ))}
                  </StatusList>
                  <ListScroll>
                    <Tri $dir="u" $w={9} $h={6} />
                    <Tri $dir="d" $w={9} $h={6} />
                  </ListScroll>
                </StatusBox>
              </Form>
              <Tabs>
                <Tab $w={53} $on>Waiting</Tab>
                <Tab $w={32}>Emp</Tab>
                <Tab $w={34}>Prov</Tab>
                <Tab $w={66}>Reminders</Tab>
              </Tabs>
              <Room>
                <RoomTitle>Waiting Room</RoomTitle>
                <RoomHead>
                  <span>Patient</span>
                  <i />
                  <span>Waited</span>
                </RoomHead>
                <RoomBody>
                  <ListScroll>
                    <Tri $dir="u" $w={8} $h={6} />
                    <Tri $dir="d" $w={8} $h={6} />
                  </ListScroll>
                </RoomBody>
              </Room>
            </Panel>
          </Work>
        </Main>
      </Body>
      <TaskBar>
        <svg width="23" height="23" viewBox="0 0 23 23">
          <defs>
            <linearGradient id="win" x1="0" y1="0" x2="1" y2="1">
              <stop offset="0" stopColor="#7fdcff" />
              <stop offset="1" stopColor="#0795f5" />
            </linearGradient>
          </defs>
          <path d="M0 0h11v11H0zM12 0h11v11H12zM0 12h11v11H0zM12 12h11v11H12z" fill="url(#win)" />
        </svg>
        <SearchPill>
          <svg width="15" height="15" viewBox="0 0 15 15" fill="none" stroke="#dcdcdc" strokeWidth="1.600">
            <circle cx="6.300" cy="6.300" r="5.300" />
            <path d="M10 10l4.300 4.300" />
          </svg>
          Search
        </SearchPill>
        <TaskItem>
          <svg width="24" height="22" viewBox="0 0 24 22">
            <rect x="6" y="0" width="18" height="16" rx="1" fill="#f4f4f4" />
            <rect x="0" y="6" width="18" height="16" rx="1" fill="#6a6a6a" />
            <rect x="6" y="6" width="12" height="10" fill="#bdbdbd" />
          </svg>
        </TaskItem>
        <TaskItem run>
          <svg width="28" height="28" viewBox="0 0 28 28">
            <circle cx="11" cy="8" r="4.500" fill="#6a72d8" />
            <path d="M15 12h9v8q0 4-4 4h-5z" fill="#4b53bc" />
            <path d="M8 12h11v9q0 6-5.500 6T8 21z" fill="#7b83eb" />
            <rect x="0" y="11" width="13" height="13" rx="1.500" fill="#4951b5" />
            <path d="M3.500 14.500h6M6.500 14.500v7" stroke="#fff" strokeWidth="1.600" />
            <circle cx="21" cy="7" r="6.800" fill="#d93438" />
            <path d="M18 7h6" stroke="#1c1c1c" strokeWidth="1.800" />
          </svg>
        </TaskItem>
        <TaskItem>
          <AppGrid s={18} />
        </TaskItem>
        <TaskItem>
          <svg width="24" height="24" viewBox="0 0 24 24">
            <path d="M12 0a12 12 0 0 1 10.400 6H12a6 6 0 0 0-5.200 3L1.600 6A12 12 0 0 1 12 0z" fill="#e33b2e" />
            <path d="M22.400 6A12 12 0 0 1 12 24l5.200-9A6 6 0 0 0 17.200 9 6 6 0 0 0 12 6z" fill="#fbc116" />
            <path d="M1.600 6A12 12 0 0 0 12 24l5.200-9a6 6 0 0 1-10.400 0z" fill="#2ba24c" />
            <circle cx="12" cy="12" r="5.800" fill="#fff" />
            <circle cx="12" cy="12" r="4.600" fill="#2a7de8" />
          </svg>
        </TaskItem>
        <TaskItem on>
          <svg width="24" height="24" viewBox="0 0 24 24">
            <defs>
              <linearGradient id="click" x1="0" y1="0" x2="1" y2="1">
                <stop offset="0" stopColor="#d414c8" />
                <stop offset="1" stopColor="#8c50e0" />
              </linearGradient>
            </defs>
            <circle cx="12" cy="12" r="12" fill="url(#click)" />
            <path d="M11 5v3M6.500 7l2 2M15.500 7l-2 2M5 11.500h3M7 15.500l1.800-1.800" stroke="#fff" strokeWidth="1.200" />
            <path d="M11 10.500l9 4-3.300 1.300 3 3.200-1.800 1.700-3-3.200-1.700 2.800z" fill="#fff" />
          </svg>
        </TaskItem>
        <TaskItem run>
          <AppGrid s={18} />
        </TaskItem>
        <TaskItem run>
          <svg width="18" height="23" viewBox="0 0 18 23">
            <path d="M.5.500h11.500l5.500 5.500v16.500H.5z" fill="#fafafa" stroke="#bbb" />
            <path d="M12 .500v5.500h5.500z" fill="#ddd" stroke="#666" strokeWidth=".8" />
          </svg>
        </TaskItem>
        <TaskItem run>
          <svg width="18" height="24" viewBox="0 0 18 24">
            <rect width="18" height="24" rx="1.500" fill="#6c7a86" />
            <rect x="2" y="2" width="14" height="4.500" fill="#3fd0f4" />
            {[0, 1, 2].map((r) =>
              [0, 1, 2].map((c) => (
                <rect key={r + "_" + c} x={2 + c * 5} y={8.500 + r * 4.800} width="4" height="3.800" fill={c === 2 && r > 0 ? "#0f4c8c" : "#c9d3dc"} />
              )),
            )}
            <rect x="12" y="13.300" width="4" height="8.600" fill="#0f4c8c" />
          </svg>
        </TaskItem>
        <Tray>
          <svg width="12" height="7" viewBox="0 0 12 7" fill="none" stroke="#fff" strokeWidth="1.500">
            <path d="M1 6l5-5 5 5" />
          </svg>
          <Lang>{"ENG\nUS"}</Lang>
          <svg width="41" height="18" viewBox="0 0 41 18" fill="none" stroke="#fff" strokeWidth="1.200">
            <path d="M10 1.500H1v11h13V9M5 16h8M7.500 12.500V16M11.500 12.500V16" />
            <path d="M12 2h4v4.500h-4zM14 6.500V16" />
            <path d="M25 6.500h2.500l4-3.500v12l-4-3.500H25z" />
            <path d="M33.500 6.500q1.500 2.500 0 5" />
            <path d="M35.500 4.500q3 4.500 0 9M38 3q4 6 0 12" stroke="#666" />
          </svg>
          <Clock>{"1:25 PM\n5/2/2025"}</Clock>
        </Tray>
      </TaskBar>
    </Screen>
  );
}
